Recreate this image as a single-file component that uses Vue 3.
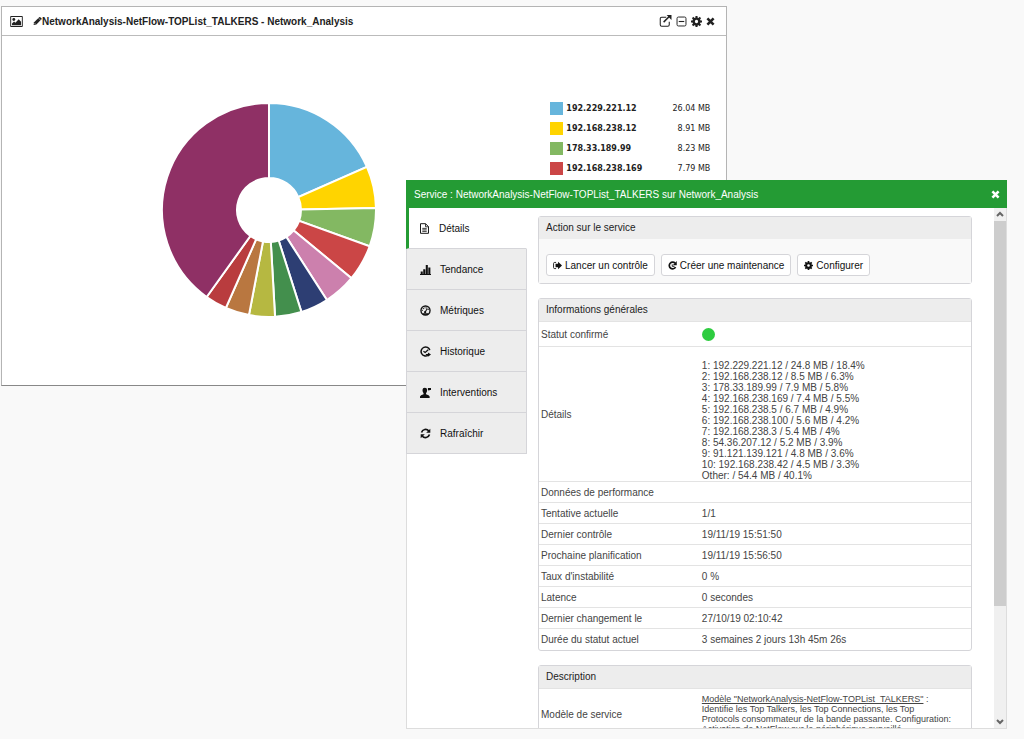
<template>
  <div class="page">
    <!-- Icon sprite -->
    <svg class="sprite" aria-hidden="true">
      <symbol id="i-image" viewBox="0 0 16 14">
        <path fill="currentColor" fill-rule="evenodd" d="M1 0h14a1 1 0 0 1 1 1v12a1 1 0 0 1-1 1H1a1 1 0 0 1-1-1V1a1 1 0 0 1 1-1zm.2 1.2v11.6h13.6V1.2z" />
        <circle cx="4.6" cy="4.5" r="1.8" fill="currentColor" />
        <path fill="currentColor" d="M2.300 11.800V9.400l2.600-2.500 1.700 1.700 4.200-4.400 3 3v4.600z" />
      </symbol>
      <symbol id="i-pencil" viewBox="0 0 16 16">
        <path fill="currentColor" d="M1 15l1-5L11 1.200q1-.8 2 0L15 3q.8 1 0 2L6 14z" />
        <path d="M2.500 11.500L4.500 13.500M10 3l3.200 3.200" stroke="#fff" stroke-width="1" fill="none" />
      </symbol>
      <symbol id="i-external" viewBox="0 0 16 16">
        <path d="M9 3H3q-2 0-2 2v8q0 2 2 2h8q2 0 2-2V9" fill="none" stroke="currentColor" stroke-width="1.400" />
        <path d="M5.500 9.500L13 2" stroke="currentColor" stroke-width="2" />
        <path fill="currentColor" d="M9.500 0H16v6.500z" />
      </symbol>
      <symbol id="i-minus" viewBox="0 0 16 16">
        <rect x="1.500" y="1.500" width="13" height="13" rx="2" fill="none" stroke="currentColor" stroke-width="1.400" />
        <path d="M4 8h8" stroke="currentColor" stroke-width="1.600" />
      </symbol>
      <symbol id="i-gear" viewBox="0 0 16 16">
        <circle cx="8" cy="8" r="4.200" fill="none" stroke="currentColor" stroke-width="3.600" />
        <path d="M8 0v4M8 12v4M0 8h4M12 8h4M2.300 2.300l3 3M10.700 10.700l3 3M13.700 2.300l-3 3M5.300 10.700l-3 3" stroke="currentColor" stroke-width="3" />
      </symbol>
      <symbol id="i-close" viewBox="0 0 16 16">
        <path d="M2.500 2.500l11 11M13.500 2.500l-11 11" stroke="currentColor" stroke-width="4.600" />
      </symbol>
      <symbol id="i-file" viewBox="0 0 16 16">
        <path d="M2.200 1h7.300l4.300 4.300V15H2.200z" fill="none" stroke="currentColor" stroke-width="1.400" />
        <path d="M9.500 1v4.500h4.300M4.800 7.800h6.400M4.800 10h6.400M4.800 12.200h6.400" fill="none" stroke="currentColor" stroke-width="1.200" />
      </symbol>
      <symbol id="i-bars" viewBox="0 0 16 16">
        <path fill="currentColor" d="M0 14.500h16V16H0zM1 11h3v3.500H1zM4.700 7.500h3v7h-3zM8.400 1.500h3v13h-3zM12.100 5h3v9.500h-3z" />
      </symbol>
      <symbol id="i-gauge" viewBox="0 0 16 16">
        <circle cx="8" cy="8" r="6.600" fill="none" stroke="currentColor" stroke-width="2" />
        <path d="M3.500 8.500a4.500 4.500 0 0 1 9 0" fill="none" stroke="currentColor" stroke-width="1.500" stroke-dasharray="1.500 1.200" />
        <path d="M7 11l3.500-5.500" stroke="currentColor" stroke-width="1.600" />
        <circle cx="7.500" cy="10.500" r="1.600" fill="currentColor" />
        <path d="M3.500 13h9" stroke="currentColor" stroke-width="2" />
      </symbol>
      <symbol id="i-history" viewBox="0 0 16 16">
        <path d="M14.300 6A6.500 6.500 0 1 0 11.500 13.500" fill="none" stroke="currentColor" stroke-width="2.200" />
        <path d="M5 7.500l2.500 2L12 5.500M8.500 12.500h5" fill="none" stroke="currentColor" stroke-width="1.800" />
        <path fill="currentColor" d="M11.500 9.500L16 12.500l-4.500 3z" />
      </symbol>
      <symbol id="i-user" viewBox="0 0 16 16">
        <path fill="currentColor" d="M7 1q3.400 0 3.400 3.500 0 3-1.600 4.500v1.700q4.700 1.200 5.200 3V16H0v-2.300q.5-1.800 5.200-3V9Q3.600 7.500 3.600 4.500 3.600 1 7 1zM11.500 1.500H16v3h-2l-1.500 1.500v-1.500h-1z" />
      </symbol>
      <symbol id="i-refresh" viewBox="0 0 16 16">
        <path d="M2.200 6.500A6 6 0 0 1 12.800 4.500M13.800 9.500A6 6 0 0 1 3.200 11.500" fill="none" stroke="currentColor" stroke-width="2.400" />
        <path fill="currentColor" d="M15 1v6H9zM1 15V9h6z" />
      </symbol>
      <symbol id="i-launch" viewBox="0 0 16 16">
        <path d="M5.500 2.500H3q-2 0-2 2v7q0 2 2 2h2.500" fill="none" stroke="currentColor" stroke-width="1.600" />
        <path fill="currentColor" d="M4.500 5H9V1.500L16 8l-7 6.500V11H4.500z" />
      </symbol>
      <symbol id="i-clock" viewBox="0 0 16 16">
        <path d="M12.800 4A6 6 0 1 0 13.500 11" fill="none" stroke="currentColor" stroke-width="3" />
        <path fill="currentColor" d="M15.500 0v7.500H8.500z" />
        <path d="M7.500 6v3.500h4" fill="none" stroke="currentColor" stroke-width="1.600" />
      </symbol>
    </svg>

    <!-- Dashboard widget -->
    <section class="widget">
      <header class="widget-header">
        <svg class="icon-image"><use href="#i-image" /></svg>
        <h1><svg class="icon-pencil"><use href="#i-pencil" /></svg>NetworkAnalysis-NetFlow-TOPList_TALKERS - Network_Analysis</h1>
        <div class="widget-tools">
          <button v-for="tool in tools" :key="tool.icon" type="button" :aria-label="tool.label">
            <svg :class="tool.icon"><use :href="`#i-${tool.icon}`" /></svg>
          </button>
        </div>
      </header>
      <div class="widget-body">
        <svg class="donut" viewBox="-108 -108 216 216" role="img" aria-label="Top talkers">
          <path v-for="slice in slices" :key="slice.color" :d="slice.path" :fill="slice.color" />
        </svg>
        <ul class="legend">
          <li v-for="item in legend" :key="item.ip">
            <span class="swatch" :style="{ backgroundColor: item.color }"></span>
            <strong>{{ item.ip }}</strong>
            <span>{{ item.size }}</span>
          </li>
        </ul>
      </div>
    </section>

    <!-- Service dialog -->
    <section class="dialog" role="dialog" aria-labelledby="dialog-title">
      <header class="dialog-header">
        <h2 id="dialog-title">Service : NetworkAnalysis-NetFlow-TOPList_TALKERS sur Network_Analysis</h2>
        <button type="button" aria-label="Fermer">
          <svg><use href="#i-close" /></svg>
        </button>
      </header>

      <div class="dialog-body">
        <nav class="tabs">
          <a
            v-for="tab in tabs"
            :key="tab.label"
            href="#"
            :class="{ active: activeTab === tab.label }"
            @click.prevent="activeTab = tab.label"
          >
            <svg><use :href="`#i-${tab.icon}`" /></svg>
            {{ tab.label }}
          </a>
        </nav>

        <main class="content">
          <section class="panel">
            <h3>Action sur le service</h3>
            <div class="actions">
              <button v-for="action in actions" :key="action.label" type="button">
                <svg><use :href="`#i-${action.icon}`" /></svg>{{ action.label }}
              </button>
            </div>
          </section>

          <section class="panel">
            <h3>Informations générales</h3>
            <table>
              <tbody>
                <tr class="status-row">
                  <th scope="row">Statut confirmé</th>
                  <td><span class="status-dot" role="img" aria-label="OK"></span></td>
                </tr>
                <tr class="details-row">
                  <th scope="row">Détails</th>
                  <td>
                    <div v-for="line in details" :key="line">{{ line }}</div>
                  </td>
                </tr>
                <tr v-for="row in infos" :key="row.label">
                  <th scope="row">{{ row.label }}</th>
                  <td>{{ row.value }}</td>
                </tr>
              </tbody>
            </table>
          </section>

          <section class="panel">
            <h3>Description</h3>
            <table>
              <tbody>
                <tr class="model-row">
                  <th scope="row">Modèle de service</th>
                  <td>
                    <u>Modèle "NetworkAnalysis-NetFlow-TOPList_TALKERS"</u> :<br>
                    Identifie les Top Talkers, les Top Connections, les Top<br>
                    Protocols consommateur de la bande passante. Configuration:<br>
                    Activation de NetFlow sur le périphérique surveillé
                  </td>
                </tr>
              </tbody>
            </table>
          </section>
        </main>

        <div class="scrollbar" aria-hidden="true">
          <svg viewBox="0 0 12 12"><path d="M3 7.500l3-3 3 3" /></svg>
          <div class="track"><div class="thumb"></div></div>
          <svg viewBox="0 0 12 12"><path d="M3 4.500l3 3 3-3" /></svg>
        </div>
      </div>
    </section>
  </div>
</template>

<script setup>
import { ref, computed } from 'vue'

const activeTab = ref('Détails')

const tools = [
  { icon: 'external', label: 'Ouvrir' },
  { icon: 'minus', label: 'Réduire' },
  { icon: 'gear', label: 'Configurer' },
  { icon: 'close', label: 'Fermer' }
]

const shares = [
  { value: 18.4, color: '#66b5dc' },
  { value: 6.3, color: '#ffd400' },
  { value: 5.8, color: '#83b862' },
  { value: 5.5, color: '#cb4646' },
  { value: 4.9, color: '#cc80ad' },
  { value: 4.2, color: '#2d3e73' },
  { value: 4, color: '#438f4d' },
  { value: 3.9, color: '#b6b841' },
  { value: 3.6, color: '#b97740' },
  { value: 3.3, color: '#b93c3e' },
  { value: 40.1, color: '#8f3065' }
]

const point = (radius, ratio) => {
  const angle = ratio * 2 * Math.PI
  return `${(radius * Math.sin(angle)).toFixed(2)} ${(-radius * Math.cos(angle)).toFixed(2)}`
}

const slices = computed(() => {
  const total = shares.reduce((sum, share) => sum + share.value, 0)
  let start = 0
  return shares.map(({ value, color }) => {
    const end = start + value / total
    const path = `M${point(107, start)}A107 107 0 0 1 ${point(107, end)}L${point(32, end)}A32 32 0 0 0 ${point(32, start)}Z`
    start = end
    return { path, color }
  })
})

const legend = [
  { ip: '192.229.221.12', size: '26.04 MB', color: '#66b5dc' },
  { ip: '192.168.238.12', size: '8.91 MB', color: '#ffd400' },
  { ip: '178.33.189.99', size: '8.23 MB', color: '#83b862' },
  { ip: '192.168.238.169', size: '7.79 MB', color: '#cb4646' }
]

const tabs = [
  { label: 'Détails', icon: 'file' },
  { label: 'Tendance', icon: 'bars' },
  { label: 'Métriques', icon: 'gauge' },
  { label: 'Historique', icon: 'history' },
  { label: 'Interventions', icon: 'user' },
  { label: 'Rafraîchir', icon: 'refresh' }
]

const actions = [
  { label: 'Lancer un contrôle', icon: 'launch' },
  { label: 'Créer une maintenance', icon: 'clock' },
  { label: 'Configurer', icon: 'gear' }
]

const details = [
  '1: 192.229.221.12 / 24.8 MB / 18.4%',
  '2: 192.168.238.12 / 8.5 MB / 6.3%',
  '3: 178.33.189.99 / 7.9 MB / 5.8%',
  '4: 192.168.238.169 / 7.4 MB / 5.5%',
  '5: 192.168.238.5 / 6.7 MB / 4.9%',
  '6: 192.168.238.100 / 5.6 MB / 4.2%',
  '7: 192.168.238.3 / 5.4 MB / 4%',
  '8: 54.36.207.12 / 5.2 MB / 3.9%',
  '9: 91.121.139.121 / 4.8 MB / 3.6%',
  '10: 192.168.238.42 / 4.5 MB / 3.3%',
  'Other: / 54.4 MB / 40.1%'
]

const infos = [
  { label: 'Données de performance', value: '' },
  { label: 'Tentative actuelle', value: '1/1' },
  { label: 'Dernier contrôle', value: '19/11/19 15:51:50' },
  { label: 'Prochaine planification', value: '19/11/19 15:56:50' },
  { label: "Taux d'instabilité", value: '0 %' },
  { label: 'Latence', value: '0 secondes' },
  { label: 'Dernier changement le', value: '27/10/19 02:10:42' },
  { label: 'Durée du statut actuel', value: '3 semaines 2 jours 13h 45m 26s' }
]
</script>

<style>
body {
  margin: 0;
  background-color: #f9f9f9;
}
</style>

<style scoped>
* {
  box-sizing: border-box;
}

.page {
  position: relative;
  min-height: 100vh;
  padding: 6px 0 0 1px;
  overflow: hidden;
  font-family: "Liberation Sans", Arial, sans-serif;
  font-size: 10px;
  color: #222;
}

.sprite {
  position: absolute;
  width: 0;
  height: 0;
}

h1,
h2,
h3 {
  margin: 0;
  font-size: inherit;
}

button {
  font: inherit;
  color: inherit;
  cursor: pointer;
}

/* Widget */
.widget {
  width: 71%;
  border: 1px solid #b4b4b4;
  border-bottom-color: #888;
  background-color: #fff;
}

.widget-header {
  display: flex;
  align-items: center;
  height: 29px;
  padding: 0 11px 0 8px;
  border-bottom: 1px solid #bbb;
}

.widget-header h1 {
  display: flex;
  align-items: center;
  margin-left: 10px;
}

.icon-image {
  width: 13px;
  height: 11px;
}

.icon-pencil {
  width: 9px;
  height: 10px;
}

.widget-tools {
  display: flex;
  align-items: center;
  gap: 4px;
  margin-left: auto;
}

.widget-tools button {
  display: flex;
  padding: 0;
  border: 0;
  background: none;
}

.widget-tools svg {
  width: 11px;
  height: 11px;
}

.widget-tools svg.external {
  width: 13px;
  height: 12px;
}

.widget-tools svg.close {
  width: 9px;
  height: 9px;
}

.widget-body {
  display: flex;
  justify-content: space-between;
  padding: 66px 16px 67px 159px;
}

.donut {
  width: 216px;
  height: 216px;
}

.donut path {
  stroke: #fff;
  stroke-width: 2;
}

.legend {
  display: flex;
  flex-direction: column;
  gap: 7px;
  width: 160px;
  margin: 0;
  padding: 0;
  list-style: none;
  font-family: "DejaVu Sans", Verdana, sans-serif;
  font-size: 8px;
}

.legend li {
  display: flex;
  align-items: center;
  gap: 3px;
  height: 13px;
  line-height: 13px;
}

.legend strong {
  flex: 1;
}

.swatch {
  width: 13px;
  height: 13px;
}

/* Dialog */
.dialog {
  position: absolute;
  top: 180px;
  right: 17px;
  bottom: 10px;
  left: 406px;
  display: flex;
  flex-direction: column;
  border: 1px solid #ddd;
  border-top: 0;
  background-color: #fff;
}

.dialog-header {
  display: flex;
  flex: none;
  align-items: center;
  justify-content: space-between;
  height: 28px;
  margin: 0 -1px;
  padding: 0 7px 0 8px;
  background-color: #249b34;
  color: #fff;
}

.dialog-header h2 {
  font-weight: normal;
}

.dialog-header button {
  display: flex;
  padding: 0;
  border: 0;
  background: none;
}

.dialog-header svg {
  width: 9px;
  height: 9px;
}

.dialog-body {
  display: flex;
  flex: 1;
  min-height: 0;
}

/* Tabs */
.tabs {
  flex: none;
  width: 121px;
  margin-left: -1px;
}

.tabs a {
  display: flex;
  align-items: center;
  gap: 9px;
  height: 41px;
  padding-left: 13px;
  border: 1px solid #d5d5d9;
  border-top: 0;
  background-color: #ededed;
  color: #111;
  text-decoration: none;
}

.tabs a.active {
  padding-left: 10px;
  border-left: 3px solid #249b34;
  border-right-color: #fff;
  background-color: #fff;
}

.tabs svg {
  width: 11px;
  height: 11px;
}

/* Content */
.content {
  display: flex;
  flex: 1;
  flex-direction: column;
  gap: 14px;
  min-width: 0;
  padding: 8px 22px 0 11px;
  overflow: hidden;
}

.panel {
  flex: none;
  border: 1px solid #d5d5d9;
  border-radius: 3px;
}

.panel h3 {
  height: 22px;
  padding-left: 7px;
  background-color: #ededed;
  font-weight: normal;
  line-height: 22px;
}

.actions {
  display: flex;
  gap: 6px;
  padding: 15px 7px 7px;
  background-color: #f9f9f9;
}

.actions button {
  display: flex;
  align-items: center;
  gap: 3px;
  height: 22px;
  padding: 0 6px;
  border: 1px solid #d5d5d9;
  border-radius: 3px;
  background-color: #fff;
  color: #111;
  white-space: nowrap;
}

.actions svg {
  width: 9px;
  height: 9px;
}

table {
  width: 100%;
  border-collapse: collapse;
  table-layout: fixed;
  color: #444;
}

th,
td {
  height: 21px;
  padding: 0 2px;
  border-top: 1px solid #e3e3e3;
  font-weight: normal;
  text-align: left;
  line-height: 11px;
}

th {
  width: 37%;
}

td {
  padding-left: 3px;
}

.status-row th,
.status-row td {
  height: 25px;
}

.status-dot {
  display: block;
  width: 13px;
  height: 13px;
  border-radius: 50%;
  background-color: #2ecc40;
}

.details-row th,
.details-row td {
  height: 135px;
}

.details-row td {
  padding-top: 13px;
}

.model-row td {
  height: 53px;
  padding-top: 5px;
  font-size: 9px;
  line-height: 10px;
  vertical-align: top;
}

/* Scrollbar */
.scrollbar {
  display: flex;
  flex: none;
  flex-direction: column;
  width: 12px;
  background-color: #f0f0f0;
}

.scrollbar svg {
  width: 12px;
  height: 13px;
}

.scrollbar path {
  fill: none;
  stroke: #666;
  stroke-width: 2;
}

.track {
  flex: 1;
}

.thumb {
  height: 78%;
  background-color: #cdcdcd;
}
</style>
